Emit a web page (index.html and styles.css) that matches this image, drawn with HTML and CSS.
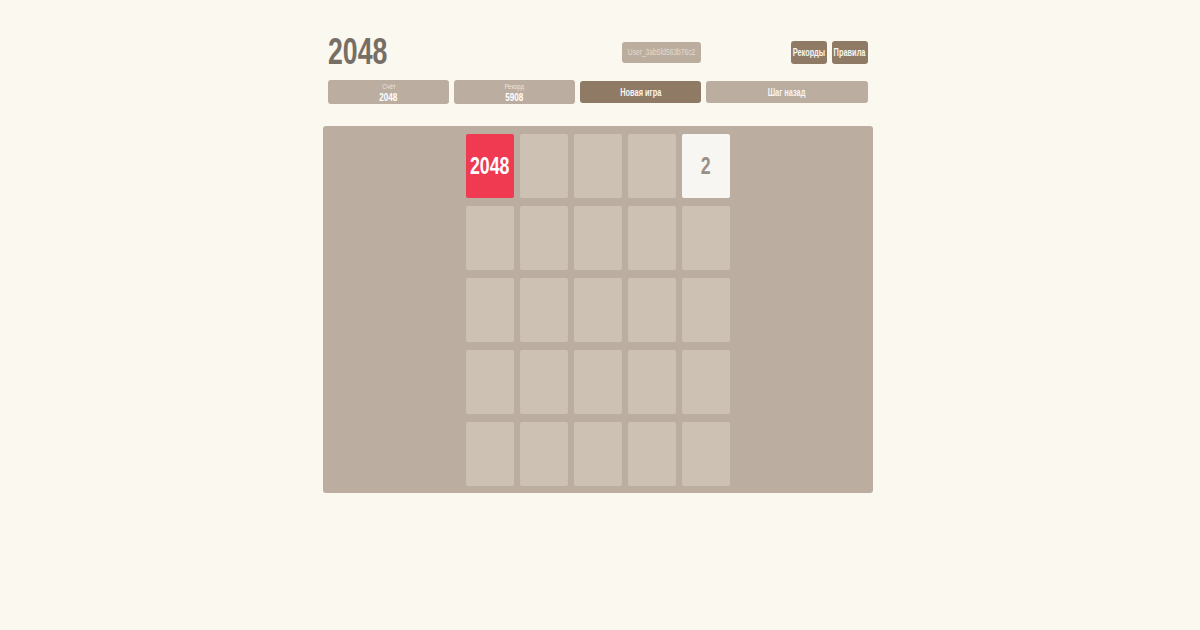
FILE: index.html
```html
<!DOCTYPE html>
<html lang="ru">
<head>
    <meta charset="UTF-8">
    <meta name="viewport" content="width=device-width, initial-scale=1.0">
    <title>2048</title>
    <link rel="stylesheet" href="styles.css">
</head>
<body>
    <div class="game">
        <div class="header">
            <h1 class="title"><span class="narrow">2048</span></h1>
            <div class="user-cell">
                <span class="user"><span class="narrow">User_3ab5fd563b76c2</span></span>
            </div>
            <div class="menu">
                <button class="menu-button"><span class="narrow">Рекорды</span></button>
                <button class="menu-button"><span class="narrow">Правила</span></button>
            </div>

            <div class="score-box">
                <span class="score-label narrow">Счёт</span>
                <span class="score-value narrow">2048</span>
            </div>
            <div class="score-box">
                <span class="score-label narrow">Рекорд</span>
                <span class="score-value narrow">5908</span>
            </div>
            <button class="action-button new-game"><span class="narrow">Новая игра</span></button>
            <button class="action-button undo"><span class="narrow">Шаг назад</span></button>
        </div>

        <div class="board">
            <div class="grid">
                <div class="cell tile-2048"><span class="narrow">2048</span></div>
                <div class="cell"></div>
                <div class="cell"></div>
                <div class="cell"></div>
                <div class="cell tile-2"><span class="narrow">2</span></div>

                <div class="cell"></div>
                <div class="cell"></div>
                <div class="cell"></div>
                <div class="cell"></div>
                <div class="cell"></div>

                <div class="cell"></div>
                <div class="cell"></div>
                <div class="cell"></div>
                <div class="cell"></div>
                <div class="cell"></div>

                <div class="cell"></div>
                <div class="cell"></div>
                <div class="cell"></div>
                <div class="cell"></div>
                <div class="cell"></div>

                <div class="cell"></div>
                <div class="cell"></div>
                <div class="cell"></div>
                <div class="cell"></div>
                <div class="cell"></div>
            </div>
        </div>
    </div>
</body>
</html>
```

FILE: styles.css
```css
body {
    margin: 0;
    padding-right: 4px;
    background-color: #fbf8ef;
    font-family: "Liberation Sans", Arial, sans-serif;
    color: #776e65;
}

/* the original face is a narrow one, squeeze the text to match */
.narrow {
    display: inline-block;
    transform: scaleX(0.74);
    white-space: nowrap;
}

.game {
    width: 550px;
    margin: 0 auto;
    padding-top: 32px;
}

.header {
    display: grid;
    grid-template-columns: 121px 121px 121px 162px;
    column-gap: 5px;
    row-gap: 8px;
    padding: 0 5px;
    align-items: center;
}

.title {
    grid-column: 1 / 3;
    margin: 0;
    font-size: 36px;
    line-height: 40px;
    font-weight: bold;
    color: #776e65;
}

.title .narrow {
    transform-origin: left center;
}

.user-cell {
    display: flex;
    justify-content: flex-end;
}

.user {
    width: 79px;
    height: 21px;
    display: flex;
    align-items: center;
    justify-content: center;
    font-size: 9px;
    color: #e3dad0;
    background-color: #bcae9f;
    border-radius: 3px;
}

.menu {
    display: flex;
    justify-content: flex-end;
    gap: 5px;
}

.menu-button {
    width: 36px;
    height: 23px;
    padding: 0;
    display: flex;
    align-items: center;
    justify-content: center;
    font-family: inherit;
    font-size: 10px;
    font-weight: bold;
    color: #f9f6f2;
    background-color: #8f7a66;
    border: none;
    border-radius: 3px;
}

.score-box {
    height: 24px;
    display: flex;
    flex-direction: column;
    align-items: center;
    justify-content: center;
    background-color: #bbada0;
    border-radius: 3px;
}

.score-label {
    font-size: 8px;
    line-height: 10px;
    color: #eee4da;
}

.score-value {
    font-size: 11px;
    line-height: 11px;
    font-weight: bold;
    color: #ffffff;
}

.action-button {
    height: 22px;
    padding: 0;
    font-family: inherit;
    font-size: 10px;
    font-weight: bold;
    color: #f9f6f2;
    border: none;
    border-radius: 3px;
}

.new-game {
    background-color: #8f7a66;
}

.undo {
    background-color: #bbada0;
}

.board {
    margin-top: 22px;
    padding: 8px 0 7px;
    display: flex;
    justify-content: center;
    background-color: #bbada0;
    border-radius: 3px;
}

.grid {
    display: grid;
    grid-template-columns: repeat(5, 48px);
    grid-auto-rows: 64px;
    column-gap: 6px;
    row-gap: 8px;
}

.cell {
    display: flex;
    align-items: center;
    justify-content: center;
    background-color: #cdc1b4;
    border-radius: 2px;
    font-weight: bold;
}

.tile-2048 {
    background-color: #ef3a52;
    color: #ffffff;
    font-size: 24px;
}

.tile-2 {
    background-color: #f7f6f2;
    color: #9a8f87;
    font-size: 24px;
}
```
